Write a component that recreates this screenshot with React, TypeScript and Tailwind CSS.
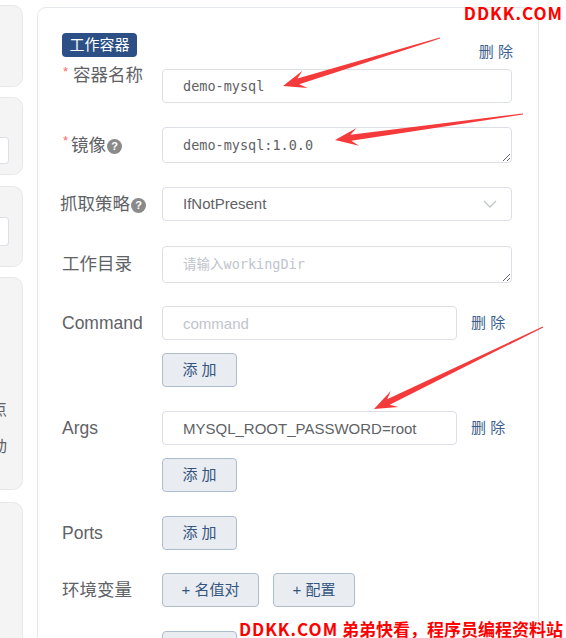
import React from "react";

function arrowPoints(tx: number, ty: number, hx: number, hy: number) {
  const dx = tx - hx;
  const dy = ty - hy;
  const L = Math.hypot(dx, dy);
  const ux = dx / L;
  const uy = dy / L;
  const nx = -uy;
  const ny = ux;
  const p = (d: number, w: number) => [hx + ux * d + nx * w, hy + uy * d + ny * w];
  const pts = [p(L, 0.5), p(16, 3), p(23, 9), [hx, hy], p(23, -9), p(16, -3), p(L, -0.5)];
  return pts.map((q) => q.map((v) => v.toFixed(1)).join(",")).join(" ");
}

function AddButton({ text, w }: { text: string; w: string }) {
  return (
    <div
      className={`flex h-[34px] ${w} shrink-0 items-center justify-center whitespace-pre rounded-[4px] border border-[#aebcd0] bg-[#e9edf2] text-[15px] text-[#34557f]`}
    >
      {text}
    </div>
  );
}

function Del({ className }: { className: string }) {
  return <span className={`whitespace-pre text-[15px] text-[#3d5f8c] ${className}`}>删 除</span>;
}

function Help() {
  return (
    <span className="ml-[1px] mt-[3px] inline-flex h-[15px] w-[15px] shrink-0 items-center justify-center rounded-full bg-[#8a8a8a] text-[11px] font-bold leading-none text-white">
      ?
    </span>
  );
}

const inputBase =
  "h-[34px] rounded-[4px] border border-[#dcdfe6] bg-white pl-[20px] text-[#606266] outline-none placeholder:text-[#c0c4cc]";
const mono = "[font-family:'DejaVu_Sans_Mono','Noto_Sans_CJK_SC',monospace] text-[13.5px]";
const sans = "[font-family:'Liberation_Sans','Noto_Sans_CJK_SC',sans-serif] text-[15px]";

export default function App() {
  return (
    <div className="relative h-[638px] w-[566px] overflow-hidden bg-white [font-family:'Liberation_Sans','Noto_Sans_CJK_SC',sans-serif]">
      <div className="flex h-full">
        {/* left column */}
        <div className="flex w-[23px] shrink-0 flex-col">
          <div className="mt-[5px] h-[82px] shrink-0 rounded-r-[10px] border border-l-0 border-[#e8e8e8] bg-[#f4f4f4]" />
          <div className="mt-[10px] flex h-[78px] shrink-0 flex-col rounded-r-[10px] border border-l-0 border-[#e8e8e8] bg-[#f4f4f4]">
            <div className="mt-[39px] h-[27px] w-[9px] rounded-r-[4px] border border-l-0 border-[#dcdfe6] bg-white" />
          </div>
          <div className="mt-[11px] flex h-[81px] shrink-0 flex-col rounded-r-[10px] border border-l-0 border-[#e8e8e8] bg-[#f4f4f4]">
            <div className="mt-[30px] h-[29px] w-[9px] rounded-r-[4px] border border-l-0 border-[#dcdfe6] bg-white" />
          </div>
          <div className="mt-[10px] flex h-[213px] shrink-0 flex-col overflow-hidden rounded-r-[10px] border border-l-0 border-[#e8e8e8] bg-[#f4f4f4] text-[16px] text-[#606266]">
            <div className="mt-[120px] flex justify-end whitespace-nowrap pr-[15px] leading-[24px]">节点</div>
            <div className="mt-[13px] flex justify-end whitespace-nowrap pr-[15px] leading-[24px]">启动</div>
          </div>
          <div className="mt-[12px] h-[200px] shrink-0 rounded-r-[10px] border border-l-0 border-[#e8e8e8] bg-[#f4f4f4]" />
        </div>

        {/* main card */}
        <div className="ml-[14px] mt-[7px] h-[700px] w-[502px] shrink-0 rounded-t-[9px] border border-[#e4e7ed] pl-[24px] pr-[25px] pt-[25px]">
          <div className="flex h-[24px] justify-between">
            <div className="flex h-[24px] w-[75px] items-center justify-center rounded-[4px] bg-[#2c4f85] text-[15px] text-white">
              工作容器
            </div>
            <Del className="mb-[-2px] self-end leading-[15px]" />
          </div>

          {/* 容器名称 */}
          <div className="mt-[12px] flex">
            <div className="-mt-[6px] flex h-[24px] w-[100px] shrink-0 items-center text-[17.5px] text-[#606266]">
              <span className="ml-[1px] mt-[2px] self-start text-[13px] leading-none text-[#f56c6c]">*</span>
              <span className="ml-[5px]">容器名称</span>
            </div>
            <input readOnly value="demo-mysql" className={`${inputBase} ${mono} w-[350px]`} />
          </div>

          {/* 镜像 */}
          <div className="mt-[24px] flex items-center">
            <div className="flex h-[24px] w-[100px] shrink-0 items-center text-[17.5px] text-[#606266]">
              <span className="ml-[1px] mt-[1px] self-start text-[13px] leading-none text-[#f56c6c]">*</span>
              <span className="ml-[3px]">镜像</span>
              <Help />
            </div>
            <textarea
              readOnly
              value="demo-mysql:1.0.0"
              className={`${mono} h-[36px] w-[350px] rounded-[4px] border border-[#dcdfe6] bg-white py-[7px] pl-[20px] leading-[20px] text-[#606266] outline-none`}
            />
          </div>

          {/* 抓取策略 */}
          <div className="mt-[24px] flex items-center">
            <div className="-ml-[2px] flex h-[24px] w-[102px] shrink-0 items-center text-[17.5px] text-[#606266]">
              <span>抓取策略</span>
              <Help />
            </div>
            <div className={`${sans} flex h-[34px] w-[350px] items-center justify-between rounded-[4px] border border-[#dcdfe6] bg-white pl-[20px] pr-[14px] text-[#606266]`}>
              <span>IfNotPresent</span>
              <svg width="14" height="8" viewBox="0 0 14 8" fill="none">
                <polyline points="1,1 7,7 13,1" stroke="#c0c4cc" strokeWidth="1.3" />
              </svg>
            </div>
          </div>

          {/* 工作目录 */}
          <div className="mt-[25px] flex items-center">
            <div className="flex h-[24px] w-[100px] shrink-0 items-center text-[17.5px] text-[#606266]">工作目录</div>
            <textarea
              readOnly
              placeholder="请输入workingDir"
              className={`${mono} h-[37px] w-[350px] rounded-[4px] border border-[#dcdfe6] bg-white py-[7px] pl-[20px] leading-[21px] text-[#606266] outline-none placeholder:text-[#c0c4cc]`}
            />
          </div>

          {/* Command */}
          <div className="mt-[23px] flex items-center">
            <div className="flex h-[24px] w-[100px] shrink-0 items-center text-[17.5px] text-[#606266]">Command</div>
            <input readOnly placeholder="command" className={`${inputBase} ${sans} w-[295px]`} />
            <Del className="ml-[14px]" />
          </div>
          <div className="mt-[13px] flex pl-[100px]">
            <AddButton text="添 加" w="w-[75px]" />
          </div>

          {/* Args */}
          <div className="mt-[24px] flex items-center">
            <div className="flex h-[24px] w-[100px] shrink-0 items-center text-[17.5px] text-[#606266]">Args</div>
            <input readOnly value="MYSQL_ROOT_PASSWORD=root" className={`${inputBase} ${sans} w-[295px]`} />
            <Del className="ml-[14px]" />
          </div>
          <div className="mt-[13px] flex pl-[100px]">
            <AddButton text="添 加" w="w-[75px]" />
          </div>

          {/* Ports */}
          <div className="mt-[24px] flex items-center">
            <div className="flex h-[24px] w-[100px] shrink-0 items-center text-[17.5px] text-[#606266]">Ports</div>
            <AddButton text="添 加" w="w-[75px]" />
          </div>

          {/* 环境变量 */}
          <div className="mt-[23px] flex items-center">
            <div className="flex h-[24px] w-[100px] shrink-0 items-center text-[17.5px] text-[#606266]">环境变量</div>
            <AddButton text="+ 名值对" w="w-[97px]" />
            <div className="ml-[14px]">
              <AddButton text="+ 配置" w="w-[82px]" />
            </div>
          </div>

          <div className="mt-[24px] flex pl-[100px]">
            <AddButton text="添 加" w="w-[75px]" />
          </div>
        </div>
      </div>

      {/* annotation arrows */}
      <svg className="pointer-events-none absolute left-0 top-0" width="566" height="638" viewBox="0 0 566 638">
        <polygon points={arrowPoints(440, 38, 283, 86)} fill="#f43a3a" />
        <polygon points={arrowPoints(523, 114, 335, 140)} fill="#f43a3a" />
        <polygon points={arrowPoints(543, 327, 374, 409)} fill="#f43a3a" />
      </svg>

      {/* watermarks */}
      <div className="absolute right-[3px] top-[1px] text-[17px] font-bold leading-[24px] tracking-[1px] text-[#ff0000] [font-family:'Noto_Sans_CJK_SC',sans-serif]">
        DDKK.COM
      </div>
      <div className="absolute bottom-[-3px] right-[3px] whitespace-nowrap text-[17px] font-bold leading-[24px] text-[#ff0000] [font-family:'Noto_Sans_CJK_SC',sans-serif]">
        <span className="tracking-[1px]">DDKK.COM</span> 弟弟快看，程序员编程资料站
      </div>
    </div>
  );
}
